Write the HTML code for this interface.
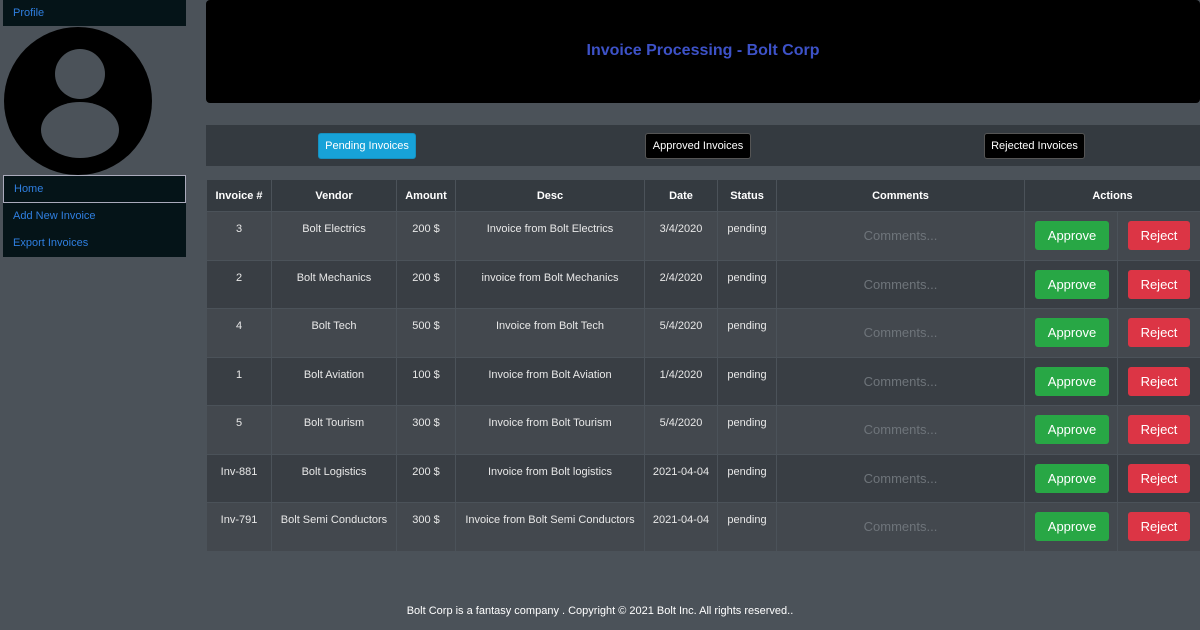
<!DOCTYPE html>
<html><head><style>
body{margin:0;width:1200px;height:630px;background:#4b5259;font-family:"Liberation Sans",sans-serif;position:relative;overflow:hidden;font-size:11px;color:#e8e8e8}
.a{position:absolute}
.side{background:#051418;color:#2f7fe0;font-size:11px}
table{border-collapse:collapse;position:absolute;left:206px;top:179px;width:994px;table-layout:fixed}
td,th{border:1px solid #4b5259;text-align:center;padding:0}
th{background:#343a40;height:31px;font-size:11px;color:#fff}
td{vertical-align:top;padding-top:11px;height:36.5px;font-size:11px}
tr.o td{background:#43484e}tr.e td{background:#393e44}
td.c{vertical-align:middle;padding-top:0;color:#6e747a;font-size:13px}
.btn{display:inline-block;border-radius:3px;color:#fff;font-size:13px;padding:7px 0;text-align:center}
.ap{background:#28a745;width:74px}.rj{background:#dc3545;width:62px}
td.act{padding-top:9px;text-align:left;padding-left:10px}
.tab{position:absolute;top:133px;height:24px;line-height:24px;border-radius:3px;font-size:11px;text-align:center}
</style></head><body>
<div class="a side" style="left:3px;top:0;width:183px;height:26px;line-height:26px"><span style="padding-left:10px">Profile</span></div>
<svg class="a" style="left:3px;top:26px" width="150" height="150"><circle cx="75" cy="75" r="74" fill="#000"/><circle cx="77" cy="48" r="25" fill="#4b5259"/><ellipse cx="77" cy="104" rx="39" ry="28" fill="#4b5259"/></svg>
<div class="a side" style="left:3px;top:175px;width:183px;height:82px"></div>
<div class="a" style="left:3px;top:175px;width:181px;height:26px;border:1px solid #aab;background:#051418;color:#2f7fe0;line-height:26px"><span style="padding-left:10px">Home</span></div>
<div class="a" style="left:13px;top:210px;color:#2f7fe0">Add New Invoice</div>
<div class="a" style="left:13px;top:237px;color:#2f7fe0">Export Invoices</div>
<div class="a" style="left:206px;top:0;width:994px;height:103px;background:#000;border-radius:4px"></div>
<div class="a" style="left:206px;top:42px;width:994px;text-align:center;color:#3d52c8;font-weight:bold;font-size:16px">Invoice Processing - Bolt Corp</div>
<div class="a" style="left:206px;top:125px;width:994px;height:41px;background:#343a40"></div>
<div class="tab" style="left:318px;width:96px;background:#17a2d8;color:#fff;border:1px solid #1590c0">Pending Invoices</div>
<div class="tab" style="left:645px;width:104px;background:#000;color:#fff;border:1px solid #555">Approved Invoices</div>
<div class="tab" style="left:984px;width:99px;background:#000;color:#fff;border:1px solid #555">Rejected Invoices</div>
<table>
<colgroup><col style="width:65px"><col style="width:125px"><col style="width:59px"><col style="width:189px"><col style="width:73px"><col style="width:59px"><col style="width:248px"><col style="width:93px"><col style="width:83px"></colgroup>
<tr><th>Invoice #</th><th>Vendor</th><th>Amount</th><th>Desc</th><th>Date</th><th>Status</th><th>Comments</th><th colspan="2">Actions</th></tr>
<tr class="o"><td>3</td><td>Bolt Electrics</td><td>200 $</td><td>Invoice from Bolt Electrics</td><td>3/4/2020</td><td>pending</td><td class="c">Comments...</td><td class="act"><span class="btn ap">Approve</span></td><td class="act"><span class="btn rj">Reject</span></td></tr>
<tr class="e"><td>2</td><td>Bolt Mechanics</td><td>200 $</td><td>invoice from Bolt Mechanics</td><td>2/4/2020</td><td>pending</td><td class="c">Comments...</td><td class="act"><span class="btn ap">Approve</span></td><td class="act"><span class="btn rj">Reject</span></td></tr>
<tr class="o"><td>4</td><td>Bolt Tech</td><td>500 $</td><td>Invoice from Bolt Tech</td><td>5/4/2020</td><td>pending</td><td class="c">Comments...</td><td class="act"><span class="btn ap">Approve</span></td><td class="act"><span class="btn rj">Reject</span></td></tr>
<tr class="e"><td>1</td><td>Bolt Aviation</td><td>100 $</td><td>Invoice from Bolt Aviation</td><td>1/4/2020</td><td>pending</td><td class="c">Comments...</td><td class="act"><span class="btn ap">Approve</span></td><td class="act"><span class="btn rj">Reject</span></td></tr>
<tr class="o"><td>5</td><td>Bolt Tourism</td><td>300 $</td><td>Invoice from Bolt Tourism</td><td>5/4/2020</td><td>pending</td><td class="c">Comments...</td><td class="act"><span class="btn ap">Approve</span></td><td class="act"><span class="btn rj">Reject</span></td></tr>
<tr class="e"><td>Inv-881</td><td>Bolt Logistics</td><td>200 $</td><td>Invoice from Bolt logistics</td><td>2021-04-04</td><td>pending</td><td class="c">Comments...</td><td class="act"><span class="btn ap">Approve</span></td><td class="act"><span class="btn rj">Reject</span></td></tr>
<tr class="o"><td>Inv-791</td><td>Bolt Semi Conductors</td><td>300 $</td><td>Invoice from Bolt Semi Conductors</td><td>2021-04-04</td><td>pending</td><td class="c">Comments...</td><td class="act"><span class="btn ap">Approve</span></td><td class="act"><span class="btn rj">Reject</span></td></tr>
</table>
<div class="a" style="left:0;top:605px;width:1200px;text-align:center;color:#fff;font-size:11px">Bolt Corp is a fantasy company . Copyright © 2021 Bolt Inc. All rights reserved..</div>
</body></html>
